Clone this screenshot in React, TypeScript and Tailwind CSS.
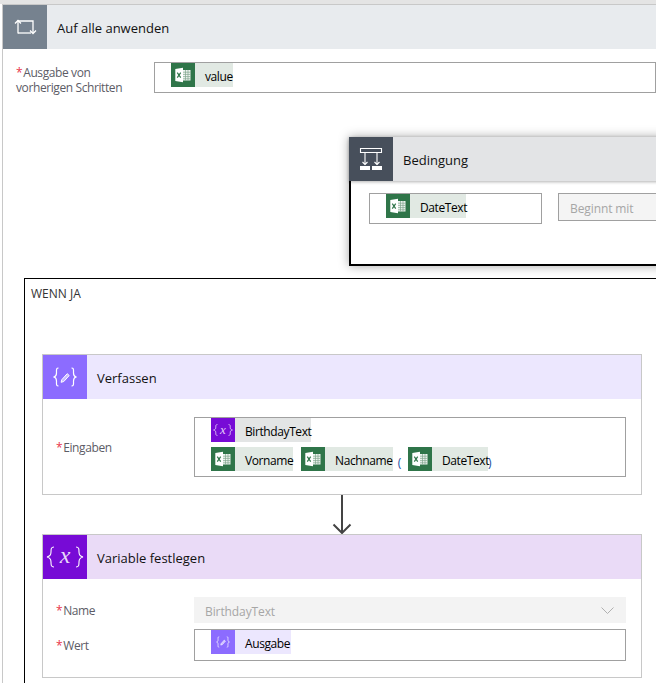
const ExcelIcon = () => (
  <svg width="24" height="24" viewBox="0 0 24 24" className="shrink-0 bg-[#2f7549]">
    <path d="M11.500 7h8v10.500h-8z" fill="#eef4f0" />
    <path d="M14.500 7v10.500M17 7v10.500M12 9.200h7.500M12 11.400h7.500M12 13.600h7.500M12 15.800h7.500" stroke="#7fa58d" strokeWidth="0.7" />
    <path d="M4.300 6 12 4.800v14.400L4.300 18z" fill="#fff" />
    <path d="M6.300 9.600 9.700 14.600M9.700 9.600 6.300 14.600" stroke="#2f7549" strokeWidth="1.200" />
  </svg>
);

const EditBraces = ({ size }: { size: number }) => (
  <svg width={size} height={size} viewBox="0 0 24 24" fill="none" stroke="#fff" strokeWidth="1.200">
    <path d="M5.500 3C3 3 3.500 5 3.500 8c0 2.500-.8 3.500-2.500 4 1.700.5 2.500 1.500 2.500 4 0 3-.5 5 2 5" />
    <path d="M18.500 3c2.500 0 2 2 2 5 0 2.500.8 3.500 2.500 4-1.700.5-2.500 1.500-2.500 4 0 3 .5 5-2 5" />
    <path d="m8.800 14.700 5.400-6 2 1.800-5.400 6-2.700.8z" fill="#ffffff88" strokeWidth="1" />
  </svg>
);

const Brace = ({ right, large }: { right?: boolean; large?: boolean }) => (
  <svg
    width={large ? 9 : 5}
    height={large ? 22 : 12}
    viewBox="0 0 9 22"
    fill="none"
    stroke={large ? '#fff' : '#e3cdf8'}
    strokeWidth={large ? 1.1 : 1.6}
    className={right ? 'scale-x-[-1]' : ''}
  >
    <path d="M8 1C5 1 5 3 5 6c0 3-1 4.300-4 5 3 .7 4 2 4 5 0 3 0 5 3 5" />
  </svg>
);

const VarGlyph = ({ large }: { large?: boolean }) => (
  <span className="flex items-center">
    <Brace large={large} />
    <span className={large
      ? 'mx-[5px] -translate-y-[2px] font-["Liberation_Serif",serif] text-[24px] leading-none text-[#e9daf9] italic'
      : 'mx-[2px] -translate-y-[1px] font-["Liberation_Serif",serif] text-[13px] leading-none text-[#e3cdf8] italic'}>x</span>
    <Brace right large={large} />
  </span>
);

const Token = ({ kind, label, width }: { kind: 'excel' | 'var' | 'edit'; label: string; width: number }) => (
  <div className={
    kind === 'excel'
      ? 'flex h-6 items-center bg-[#e1e9e3]'
      : kind === 'var'
        ? 'flex h-6 items-center bg-[#e3e5e5]'
        : 'flex h-6 items-center bg-[#ece7fe]'
  } style={{ width }}>
    {kind === 'excel' && <ExcelIcon />}
    {kind === 'var' && (
      <div className="flex h-6 w-6 shrink-0 items-center justify-center bg-[#770bd6]"><VarGlyph /></div>
    )}
    {kind === 'edit' && (
      <div className="flex h-6 w-6 shrink-0 items-center justify-center bg-[#8c6cff]"><EditBraces size={14} /></div>
    )}
    <span className="ml-[10px] pt-[3px] text-[12px] leading-none tracking-[-0.4px] whitespace-nowrap text-black">{label}</span>
  </div>
);

const Label = ({ children }: { children: string }) => (
  <div className="text-[12px] leading-[15px] tracking-[-0.4px] text-[#5c5c66]">
    <span className="mr-[1px] text-[#e8344a]">*</span>
    {children}
  </div>
);

const Title = ({ children }: { children: string }) => (
  <span className="ml-[10px] pt-[4px] text-[13px] text-[#111]">{children}</span>
);

export default function App() {
  return (
    <div className='h-[683px] w-[656px] overflow-hidden bg-white font-["Open_Sans",sans-serif]'>
      <div className="h-[4px] bg-[#e4e4e4]" />
      <div className="ml-[2px] h-[679px] border-t border-l border-[#c8c8c8]">
        <div className="flex h-11 items-center bg-[#e8ebee]">
          <div className="flex h-11 w-11 items-center justify-center bg-[#76828f]">
            <svg width="24" height="18" viewBox="0 0 24 18" fill="none" stroke="#fff" strokeWidth="1.300">
              <path d="M5 15.500V3h15v12" />
              <path d="M2 5.500 5 2.500l3 3" />
              <path d="M17 12.500l3 3 3-3" />
              <path d="M5 15h13" />
            </svg>
          </div>
          <Title>Auf alle anwenden</Title>
        </div>

        <div className="mt-[13px] flex h-[31px]">
          <div className="ml-[13px] w-[138px] shrink-0 pt-[3px] pr-[20px]">
            <Label>Ausgabe von vorherigen Schritten</Label>
          </div>
          <div className="h-[31px] w-[516px] border border-[#a0a0a0] pl-[16px]">
            <Token kind="excel" label="value" width={62} />
          </div>
        </div>

        <div className="mt-[44px] ml-[346px] w-[340px] shadow-[0_0_10px_rgba(0,0,0,0.35)]">
          <div className="relative z-10 flex h-11 items-center bg-[#e3e4e6] shadow-[0_1px_3px_rgba(0,0,0,0.3)]">
            <div className="flex h-11 w-11 items-center justify-center bg-[#474f5b]">
              <svg width="24" height="24" viewBox="0 0 24 24" fill="none" stroke="#fff" strokeWidth="1.100">
                <path d="M1.500 1.500h21v4h-21z" />
                <path d="M6 5.500v12M18 5.500v12" />
                <path d="M3.500 15l2.500 2.500L8.500 15M15.500 15l2.500 2.500 2.500-2.500" />
                <path d="M1 19h10v4H1zM13 19h10v4H13z" fill="#fff" stroke="none" />
              </svg>
            </div>
            <Title>Bedingung</Title>
          </div>
          <div className="flex h-[85px] gap-4 border-b-2 border-l-2 border-black bg-white pt-[12px] pl-[18px]">
            <div className="h-[31px] w-[173px] border border-[#a0a0a0] pl-[16px]">
              <Token kind="excel" label="DateText" width={80} />
            </div>
            <div className="flex h-[28px] w-[120px] items-center border border-[#a0a0a0] bg-[#f4f4f4] pt-[3px] pl-[11px] text-[12px] tracking-[-0.1px] text-[#a6a6a6]">
              Beginnt mit
            </div>
          </div>
        </div>

        <div className="mt-[12px] ml-[21px] h-[420px] w-[660px] border border-black pt-[7px] pl-[6px]">
          <div className="text-[12px] leading-[16px] text-[#333]">WENN JA</div>

          <div className="mt-[52px] ml-[11px] flex h-[141px] w-[600px] flex-col border border-[#c8c8c8]">
            <div className="flex h-11 items-center bg-[#ece7fe]">
              <div className="flex h-11 w-11 items-center justify-center bg-[#8c6cff]"><EditBraces size={24} /></div>
              <Title>Verfassen</Title>
            </div>
            <div className="mt-[18px] flex">
              <div className="ml-[13px] w-[138px] self-center pt-[1px]"><Label>Eingaben</Label></div>
              <div className="flex h-[60px] w-[432px] flex-col gap-[5px] border border-[#a0a0a0] pl-[16px]">
                <Token kind="var" label="BirthdayText" width={100} />
                <div className="flex items-center">
                  <Token kind="excel" label="Vorname" width={82} />
                  <div className="w-2" />
                  <Token kind="excel" label="Nachname" width={92} />
                  <span className="mt-[8px] w-[15px] pr-[2px] text-center text-[12px] leading-none text-[#1a4fa0]">(</span>
                  <Token kind="excel" label="DateText" width={80} />
                  <span className="mt-[8px] text-[12px] leading-none text-[#1a4fa0]">)</span>
                </div>
              </div>
            </div>
          </div>

          <div className="ml-[11px] flex h-[39px] w-[600px] justify-center">
            <svg width="20" height="39" viewBox="0 0 20 39" fill="none" stroke="#444" strokeWidth="2">
              <path d="M10 0v38" />
              <path d="M1.500 29.500 10 38l8.500-8.500" />
            </svg>
          </div>

          <div className="ml-[11px] flex h-[144px] w-[600px] flex-col border border-[#c8c8c8]">
            <div className="flex h-11 items-center bg-[#eadbf7]">
              <div className="flex h-11 w-11 items-center justify-center bg-[#770bd6]"><VarGlyph large /></div>
              <Title>Variable festlegen</Title>
            </div>
            <div className="mt-[18px] flex items-center">
              <div className="ml-[13px] w-[138px] pt-[1px]"><Label>Name</Label></div>
              <div className="flex h-[26px] w-[432px] items-center justify-between bg-[#f3f3f3] pr-[12px] pl-[11px] text-[12px] tracking-[-0.1px] text-[#a6a6a6]">
                <span className="pt-[3px]">BirthdayText</span>
                <svg width="13" height="7" viewBox="0 0 13 7" fill="none" stroke="#b0b0b0" strokeWidth="1">
                  <path d="M.5.500l6 6 6-6" />
                </svg>
              </div>
            </div>
            <div className="mt-[6px] flex items-center">
              <div className="ml-[13px] w-[138px]"><Label>Wert</Label></div>
              <div className="h-[32px] w-[432px] border border-[#a0a0a0] pl-[16px]">
                <Token kind="edit" label="Ausgabe" width={80} />
              </div>
            </div>
          </div>
        </div>
      </div>
    </div>
  );
}
